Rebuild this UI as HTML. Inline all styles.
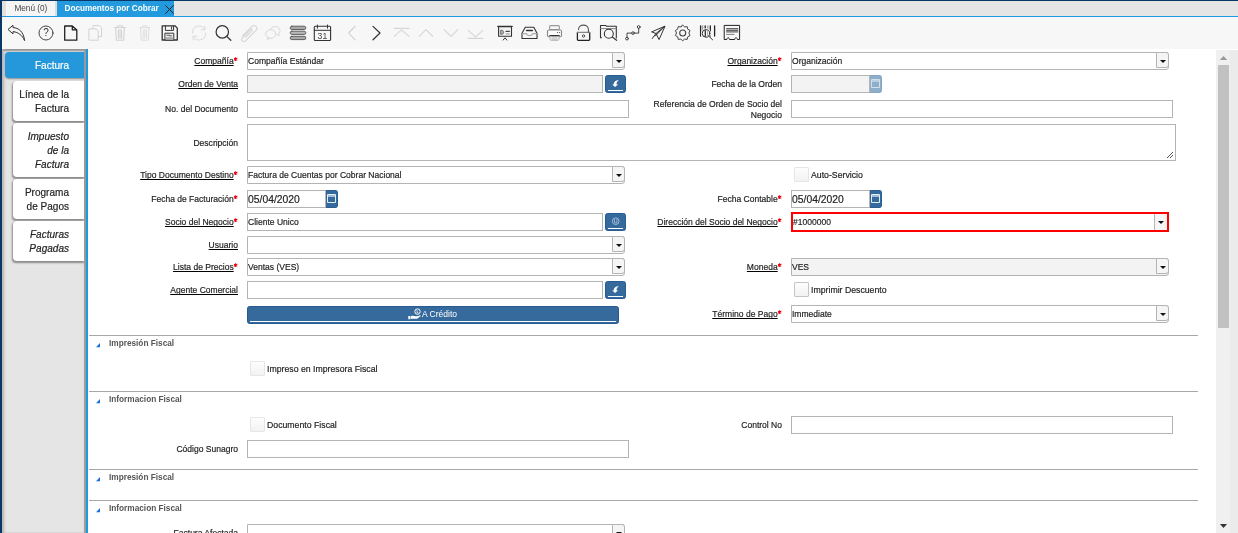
<!DOCTYPE html>
<html><head><meta charset="utf-8">
<style>
*{box-sizing:border-box;margin:0;padding:0}
html,body{width:1238px;height:533px;overflow:hidden;background:#fff;font-family:"Liberation Sans",sans-serif;position:relative}
.abs{position:absolute}
#navl{position:absolute;left:0;top:0;width:2px;height:533px;background:#0a3866}
#navt{position:absolute;left:0;top:0;width:1238px;height:1px;background:#0a3866}
#tabbar{position:absolute;left:2px;top:1px;width:1236px;height:15px;background:#e5e5e5}
#menutab{position:absolute;left:2px;top:1px;width:55px;height:15px;background:#f5f5f5;border-left:4px solid #e1e1e1;border-right:2px solid #dcdcdc;font-size:8.2px;color:#444;line-height:15px;padding-left:8.5px}
#doctab{position:absolute;left:57px;top:1px;width:117px;height:15px;background:#239ade;font-size:8.2px;font-weight:bold;color:#fff;line-height:15px;padding-left:7.5px}
#blueline{position:absolute;left:2px;top:16px;width:1236px;height:1px;background:#1f9ae0}
#toolbar{position:absolute;left:2px;top:17px;width:1236px;height:32px;background:#f7f7f7}
#lpanel{position:absolute;left:2px;top:49px;width:84px;height:484px;background:#e5e5e5;box-shadow:inset 3px 0 3px -1px #b5b5b5, inset -2px 0 1px #9a9a9a, inset 0 2px 2px #8f8f8f}
#lline{position:absolute;left:86px;top:49px;width:2px;height:484px;background:#1f9ae0}
.vt{position:absolute;background:#fff;border-radius:4px 0 0 4px;box-shadow:-0.5px 1.5px 2px #8a8a8a;color:#222}
.vtt{position:absolute;right:15px;top:7.3px;width:200px;text-align:right;font-size:10.8px;-webkit-text-stroke:0.2px currentColor;line-height:13.8px;white-space:nowrap;transform:scaleX(0.93);transform-origin:100% 50%}
.vt.act{background:#2598dc;color:#fff;border-radius:4px 0 0 4px;box-shadow:0 1px 2px #8a8a8a}
#sbar{position:absolute;left:1216px;top:50px;width:22px;height:483px;background:#f0f0f0}
#sbar2{position:absolute;left:1230px;top:50px;width:8px;height:483px;background:#ebebeb}
#sthumb{position:absolute;left:1218px;top:65px;width:11px;height:263px;background:#c1c1c1}
.lbl{position:absolute;width:300px;text-align:right;font-size:9.8px;color:#222;-webkit-text-stroke:0.2px #222;white-space:nowrap;transform:scaleX(0.87);transform-origin:100% 50%}
.lbl u{text-decoration:underline;text-decoration-thickness:1px;text-underline-offset:0.6px;text-decoration-color:#000;text-decoration-skip-ink:none}
.req{vertical-align:2.8px;margin-left:0.4px}
.tb{position:absolute;border:1px solid #b4b4b4;font-size:9.8px;color:#222;-webkit-text-stroke:0.2px #222;white-space:nowrap;overflow:visible}
.it{display:inline-block;transform:scaleX(0.87);transform-origin:0 50%}
.tb.big{font-size:11.5px;color:#222}
.tb.big .it{transform:scaleX(0.9)}
.ddb{position:absolute;width:13px;background:#f5f5f5;border:1px solid #b4b4b4;border-radius:0 3px 3px 0}
.arr{position:absolute;left:2.7px;top:6.8px;width:0;height:0;border-left:3px solid transparent;border-right:3px solid transparent;border-top:3.4px solid #111}
.bb{position:absolute;background:#366a9c;border:1px solid #265c90;border-radius:2.5px}
.bbl{position:absolute;left:2px;right:2px;bottom:1px;height:1px;background:#fff}
.bbt{position:absolute;left:0;right:0;top:0;text-align:center;color:#fff;font-size:9.8px;line-height:15px}
.calb{position:absolute;width:12px;height:18px;background:#366a9c;border:1px solid #2a5f92;border-left:none;border-radius:0 3px 3px 0}
.calb svg{position:absolute;left:0;top:0}
.calb.dis{background:#8eafcc;border-color:#86a6c3}
.sep{position:absolute;left:89px;width:1109px;height:1px;background:#a8a8a8}
.tri{position:absolute}
.hd{position:absolute;font-size:8.25px;font-weight:bold;color:#555;line-height:14px;white-space:nowrap}
.cb{position:absolute;width:15px;height:15px;border:1px solid #e6e6e6;background:linear-gradient(#fdfdfd,#f2f2f2);border-radius:1px}
.cbt{position:absolute;font-size:9.8px;color:#222;-webkit-text-stroke:0.2px #222;line-height:15px;white-space:nowrap;transform:scaleX(0.89);transform-origin:0 50%}
</style></head><body>
<div id="root" style="position:absolute;left:0;top:0;width:1238px;height:533px;overflow:hidden;will-change:transform">
<div id="navt"></div>
<div id="tabbar"></div>
<div id="menutab">Menú (0)</div>
<div id="doctab">Documentos por Cobrar<svg style="position:absolute;left:108px;top:4px" width="9" height="9" viewBox="0 0 9 9"><path d="M0.3 0.3 L8.7 8.7 M8.7 0.3 L0.3 8.7" stroke="#222" stroke-width="1"/></svg></div>
<div id="blueline"></div>
<div id="toolbar"></div>
<svg class="abs" style="left:0;top:17px" width="1238" height="32" viewBox="0 17 1238 32">
 <g fill="none" stroke-linejoin="round" stroke-linecap="round">
  <!-- undo -->
  <path d="M8.3 29.2 L13 25.3 L13 27.6 C18.5 27.8 23.6 31.5 24.6 40.6 C22.4 35.5 18.6 32.3 13 31.6 L13 33.5 Z" stroke="#333" stroke-width="1"/>
  <!-- help -->
  <circle cx="46" cy="33" r="7" stroke="#444" stroke-width="1"/>
  <!-- new -->
  <path d="M64.7 26 H72.3 L76.8 30 V40.2 H64.7 Z M72.3 26 V29.8 H76.8" stroke="#222" stroke-width="1.3"/>
  <!-- copy -->
  <path d="M93 28 V25.6 H99.5 L101.6 27.7 V36.6 H98.4" stroke="#d2d2d2" stroke-width="1"/>
  <path d="M89.3 28.9 H96 L98.2 31 V40.2 H89.3 Z" stroke="#d2d2d2" stroke-width="1"/>
  <!-- trash -->
  <path d="M114.5 27.6 H125.5 M117.6 27.6 V25.8 H122.4 V27.6 M115.6 27.6 L116.4 40.2 H123.6 L124.4 27.6 M118.4 29.8 V38.4 M120 29.8 V38.4 M121.6 29.8 V38.4" stroke="#d0d0d0" stroke-width="1"/>
  <path d="M139.8 27.6 H149.7 M142.5 27.6 V25.8 H147 V27.6 M140.5 27.6 L141.2 40.2 H148.3 L149 27.6 M143.2 29.8 V38.4 M144.8 29.8 V38.4 M146.4 29.8 V38.4" stroke="#dedede" stroke-width="1"/>
  <!-- save -->
  <path d="M162.2 25.8 H175 L177.3 28.1 V40 H162.2 Z" stroke="#333" stroke-width="1.3"/>
  <path d="M165.4 25.8 V30.4 H173.6 V25.8 M171.6 26.8 V29.2" stroke="#333" stroke-width="1"/>
  <rect x="165.3" y="33.2" width="8.5" height="6.8" fill="#f4f4f4" stroke="#333" stroke-width="1"/>
  <rect x="165.8" y="37.2" width="7.5" height="2.6" fill="#aaa"/>
  <path d="M166.8 35.2 H169.2 M169.2 35.8 H171.8" stroke="#555" stroke-width="1"/>
  <!-- refresh -->
  <path d="M192.5 33 A6.5 6.5 0 0 1 204.8 29.6 M205.5 33 A6.5 6.5 0 0 1 193.2 36.4 M204.8 26.2 V29.8 H201.2 M193.2 39.8 V36.2 H196.8" stroke="#dadada" stroke-width="1"/>
  <!-- find -->
  <circle cx="222.3" cy="31.9" r="6.2" stroke="#333" stroke-width="1.2"/>
  <path d="M226.8 36.4 L230.8 40.2" stroke="#333" stroke-width="1.3"/>
  <!-- attach -->
  <g transform="translate(248.8 32.9) rotate(45)">
   <path d="M-2.3 6.5 V-6.8 A2.8 2.8 0 0 1 3.3 -6.8 V8 A2.2 2.2 0 0 1 -1.1 8 V-3.8 A0.9 0.9 0 0 1 0.7 -3.8 V5.5" stroke="#d4d4d4" stroke-width="1"/>
  </g>
  <!-- chat -->
  <path d="M270.6 29 C271.8 26.6 275.3 25.8 277.7 27 C280.3 28.4 280.7 31.8 278.7 33.7 L279 35.8 L277.2 34.6" stroke="#d8d8d8" stroke-width="1"/>
  <ellipse cx="270.8" cy="34" rx="5" ry="4.4" fill="#f7f7f7" stroke="#d8d8d8" stroke-width="1"/>
  <path d="M268 37.9 L267.3 39.6 L269.9 38.3" stroke="#d8d8d8" stroke-width="1"/>
  <!-- multirow -->
  <rect x="290.2" y="26.2" width="15.6" height="3.3" rx="1.6" fill="#a9a9a9" stroke="#555" stroke-width="0.9"/>
  <rect x="290.2" y="31.2" width="15.6" height="3.2" rx="1.6" fill="#b8b8b8" stroke="#555" stroke-width="0.9"/>
  <rect x="290.2" y="36.3" width="15.6" height="3.3" rx="1.6" fill="#a9a9a9" stroke="#555" stroke-width="0.9"/>
  <!-- calendar -->
  <rect x="314.3" y="26.3" width="16.3" height="14.2" rx="1" stroke="#333" stroke-width="1.1"/>
  <path d="M314.3 30.3 H330.6 M317.4 25 V28.2 M327.5 25 V28.2" stroke="#333" stroke-width="1"/>
  <!-- prev/next -->
  <path d="M355 26.4 L348.7 33 L355 39.8" stroke="#d0d0d0" stroke-width="1.1"/>
  <path d="M373 26.4 L380 33 L373 39.8" stroke="#333" stroke-width="1.2"/>
  <!-- first up down last -->
  <path d="M394.2 28.4 H409 M394.2 36.3 L401.5 29.8 L409 36.3" stroke="#d6d6d6" stroke-width="1.1"/>
  <path d="M419.2 36.3 L425.9 29.6 L432.7 36.3" stroke="#d6d6d6" stroke-width="1.1"/>
  <path d="M444.1 29.6 L450.9 36.3 L457.8 29.6" stroke="#d6d6d6" stroke-width="1.1"/>
  <path d="M468.2 30.3 L475.5 36.8 L482.8 30.3 M468.2 38.4 H482.8" stroke="#d6d6d6" stroke-width="1.1"/>
  <!-- report -->
  <path d="M497.8 26.4 H512.2" stroke="#333" stroke-width="1.2"/>
  <path d="M498.6 27.6 H511.4" stroke="#bbb" stroke-width="1"/>
  <path d="M498.6 26.5 V36.2 H511.5 V26.5" stroke="#333" stroke-width="1.1"/>
  <path d="M500.8 30.2 H502 C504.2 30.2 504.2 34.3 502 34.3 H500.8 Z" fill="#aaa" stroke="#777" stroke-width="1"/>
  <path d="M506 31.3 H509.4" stroke="#444" stroke-width="1.2"/>
  <path d="M506 33.8 H509.4" stroke="#aaa" stroke-width="1.2"/>
  <path d="M503.1 40.1 L505 37.8 L506.9 40.1" stroke="#333" stroke-width="1"/>
  <!-- archive -->
  <path d="M522 38.5 V33.3 L525.3 27.3 H533.8 L537 33.3 V38.5 Z" stroke="#333" stroke-width="1.1"/>
  <path d="M522.5 33.6 H526.6 C527 36.3 532 36.3 532.5 33.6 H536.6" stroke="#aaa" stroke-width="1.1"/>
  <path d="M526.6 30.4 H532.4" stroke="#333" stroke-width="1.5"/>
  <!-- print -->
  <rect x="549.6" y="25.6" width="9.8" height="4" rx="1" fill="#f7f7f7" stroke="#999" stroke-width="1.1"/>
  <rect x="547.5" y="30" width="14" height="6.8" rx="1.2" fill="#fbfbfb" stroke="#888" stroke-width="1.1"/>
  <rect x="550" y="35.7" width="9" height="4.5" rx="1.2" fill="#d4d4d4" stroke="#aaa" stroke-width="1"/>
  <path d="M549.8 35.7 H559.2" stroke="#333" stroke-width="1.2"/>
  <path d="M551 36.8 V39.5 M558 36.8 V39.5" stroke="#eee" stroke-width="1"/>
  <circle cx="557.4" cy="32.5" r="0.55" fill="#333"/><circle cx="559.6" cy="32.5" r="0.55" fill="#333"/>
  <!-- unlock -->
  <path d="M577.4 32.4 V39.6 Q577.4 40.4 578.2 40.4 H588.9 Q589.7 40.4 589.7 39.6 V32.4" stroke="#222" stroke-width="1.3"/><path d="M577.4 32.4 H589.7" stroke="#888" stroke-width="1.1"/>
  <path d="M578.5 29.6 C578.5 23.6 588.4 23.6 588.4 29.6 V32.2" stroke="#555" stroke-width="1.1"/>
  <ellipse cx="583.5" cy="36" rx="1.1" ry="1.3" stroke="#444" stroke-width="0.9"/>
  <!-- zoom across -->
  <path d="M601.5 37.8 H600.5 V25.5 H605.8 L606.5 26.3 H616.3 V38" stroke="#333" stroke-width="1.1"/>
  <path d="M600.5 28.6 H616.3" stroke="#777" stroke-width="0.9"/>
  <circle cx="608.8" cy="33.7" r="4.5" stroke="#333" stroke-width="1.1"/>
  <path d="M612.2 37 L616.6 40.3" stroke="#333" stroke-width="1.1"/>
  <!-- workflow -->
  <circle cx="627" cy="38.6" r="1.4" stroke="#333" stroke-width="0.9"/>
  <circle cx="633" cy="33.1" r="1.3" stroke="#333" stroke-width="0.9"/>
  <circle cx="638.7" cy="27" r="1.4" stroke="#333" stroke-width="0.9"/>
  <path d="M627 37.2 V33.1 H631.7 M634.3 33.1 H638.7 V28.4" stroke="#333" stroke-width="0.9"/>
  <!-- send -->
  <path d="M664.7 26.3 L651.6 31.9 L656 33.5 L658.9 39.2 Z M664.7 26.3 L656 33.5 M656 33.5 L652.2 38.6 M664.7 26.3 L655.3 36" stroke="#333" stroke-width="1"/>
  <!-- gear -->
  <path d="M682.7 25.2 L684.6 26.9 L687.2 26.6 L687.7 29.1 L690 30.5 L688.9 33 L690 35.5 L687.7 36.9 L687.2 39.4 L684.6 39.1 L682.7 40.8 L680.8 39.1 L678.2 39.4 L677.7 36.9 L675.4 35.5 L676.5 33 L675.4 30.5 L677.7 29.1 L678.2 26.6 L680.8 26.9 Z" stroke="#444" stroke-width="1"/>
  <circle cx="682.7" cy="33" r="3" stroke="#444" stroke-width="1.1"/>
  <!-- barcode search -->
  <path d="M700.6 25.8 V36 M705.2 25.8 V31 M710.3 25.8 V36 M714.6 25.8 V36" stroke="#222" stroke-width="1.3"/>
  <path d="M702.7 25.8 V36 M707.8 25.8 V36" stroke="#999" stroke-width="1.2"/>
  <circle cx="706" cy="33.4" r="3.8" fill="#f7f7f7" stroke="#f7f7f7" stroke-width="2.6"/>
  <circle cx="706" cy="33.4" r="3.8" fill="#f7f7f7" stroke="#333" stroke-width="1"/>
  <path d="M705.3 30.6 V36.2" stroke="#222" stroke-width="1.2"/>
  <path d="M707.6 30.8 V36" stroke="#aaa" stroke-width="1"/>
  <path d="M708.8 36.2 L712.6 39.8" stroke="#333" stroke-width="1"/>
  <!-- receipt -->
  <path d="M724.6 25.4 H739.6 V39.5 H737.4 C736.8 37 735.3 37 734.7 39.5 H729.5 C728.9 37 727.4 37 726.8 39.5 H724.6 Z" stroke="#222" stroke-width="1"/>
  <path d="M726.6 28.7 H737.8 M726.6 30.3 H737.8 M726.6 31.9 H737.8" stroke="#666" stroke-width="1.2"/>
  <path d="M726.6 34.4 H734" stroke="#666" stroke-width="0.8"/>
 </g>
 <text x="46" y="36.3" text-anchor="middle" font-family="Liberation Sans" font-size="10" fill="#333">?</text>
 <text x="322.4" y="38.5" text-anchor="middle" font-family="Liberation Sans" font-size="8.6" fill="#444">31</text>
</svg>
<div id="lpanel"></div>
<div id="lline"></div>
<div class="vt act" style="left:5px;top:52px;width:79px;height:26px"><div class="vtt" style="top:0.4px;line-height:26px">Factura</div></div>
<div class="vt" style="left:13px;top:81px;width:71px;height:40px"><div class="vtt">Línea de la<br>Factura</div></div>
<div class="vt" style="left:13px;top:123px;width:71px;height:54px"><div class="vtt" style="font-style:italic">Impuesto<br>de la<br>Factura</div></div>
<div class="vt" style="left:13px;top:179px;width:71px;height:40px"><div class="vtt">Programa<br>de Pagos</div></div>
<div class="vt" style="left:13px;top:221px;width:71px;height:40px"><div class="vtt" style="font-style:italic">Facturas<br>Pagadas</div></div>
<div id="navl"></div>
<div class="lbl" style="left:-62px;top:52px;height:18px;line-height:18px"><u>Compañía</u><svg class="req" width="4.6" height="4.4" viewBox="0 0 4.6 4.4"><path d="M2.3 0.2 V4.2 M0.4 1.2 L4.2 3.2 M0.4 3.2 L4.2 1.2" stroke="#f0000c" stroke-width="1.2"/></svg></div>
<div class="tb" style="left:247px;top:52px;width:378px;height:18px;background:#fff;line-height:16px;border-radius:0 3px 3px 0"><span class="it">Compañía Estándar</span><div class="ddb" style="right:-1px;top:-1px;height:16px"><i class="arr"></i></div></div>
<div class="lbl" style="left:482px;top:52px;height:18px;line-height:18px"><u>Organización</u><svg class="req" width="4.6" height="4.4" viewBox="0 0 4.6 4.4"><path d="M2.3 0.2 V4.2 M0.4 1.2 L4.2 3.2 M0.4 3.2 L4.2 1.2" stroke="#f0000c" stroke-width="1.2"/></svg></div>
<div class="tb" style="left:791px;top:52px;width:378px;height:18px;background:#fff;line-height:16px;border-radius:0 3px 3px 0"><span class="it">Organización</span><div class="ddb" style="right:-1px;top:-1px;height:16px"><i class="arr"></i></div></div>
<div class="lbl" style="left:-62px;top:75px;height:18px;line-height:18px"><u>Orden de Venta</u></div>
<div class="tb " style="left:247px;top:75px;width:356px;height:18px;background:#f3f3f3;line-height:16px"><span class="it"></span></div>
<div class="bb" style="left:605px;top:75px;width:21px;height:18px"><svg width="21" height="18" viewBox="0 0 21 18" style="position:absolute;left:-1px;top:-1px"><path d="M13.9 5 C10.4 5.2 8.5 7.3 8.8 9.5 L7.2 9.5 L10.1 12.1 L13.2 9.3 L11.5 9.4 C11.4 7.7 12.3 6.1 13.9 5Z" fill="#fff"/></svg><div class="bbl"></div></div>
<div class="lbl" style="left:482px;top:75px;height:18px;line-height:18px">Fecha de la Orden</div>
<div class="tb " style="left:791px;top:75px;width:79px;height:18px;background:#f3f3f3;line-height:16px"><span class="it"></span></div>
<div class="calb dis" style="left:870px;top:75px"><svg width="12" height="18" viewBox="0 0 12 18"><path d="M1.5 3.5 H9.5 V11.5 H1.5 Z" fill="none" stroke="#d3e0ec" stroke-width="1"/><path d="M1.5 5 H9.5" stroke="#d3e0ec" stroke-width="1.3"/></svg></div>
<div class="lbl" style="left:-62px;top:100px;height:18px;line-height:18px">No. del Documento</div>
<div class="tb " style="left:247px;top:100px;width:382px;height:18px;background:#fff;line-height:16px"><span class="it"></span></div>
<div class="lbl" style="left:482px;top:99px;height:22px;line-height:10.5px;white-space:normal;padding-top:0">Referencia de Orden de Socio del<br>Negocio</div>
<div class="tb " style="left:791px;top:100px;width:382px;height:18px;background:#fff;line-height:16px"><span class="it"></span></div>
<div class="lbl" style="left:-62px;top:124px;height:37px;line-height:37px">Descripción</div>
<div class="tb" style="left:247px;top:124px;width:929px;height:37px"><svg width="8" height="8" style="position:absolute;right:1px;bottom:1px" viewBox="0 0 8 8"><path d="M1 7 L7 1 M4 7 L7 4" stroke="#555" stroke-width="1"/></svg></div>
<div class="lbl" style="left:-62px;top:166px;height:18px;line-height:18px"><u>Tipo Documento Destino</u><svg class="req" width="4.6" height="4.4" viewBox="0 0 4.6 4.4"><path d="M2.3 0.2 V4.2 M0.4 1.2 L4.2 3.2 M0.4 3.2 L4.2 1.2" stroke="#f0000c" stroke-width="1.2"/></svg></div>
<div class="tb" style="left:247px;top:166px;width:378px;height:18px;background:#fff;line-height:16px;border-radius:0 3px 3px 0"><span class="it">Factura de Cuentas por Cobrar Nacional</span><div class="ddb" style="right:-1px;top:-1px;height:16px"><i class="arr"></i></div></div>
<div class="cb" style="left:794px;top:167px;border-color:#e6e6e6"></div>
<div class="cbt" style="left:811px;top:167px">Auto-Servicio</div>
<div class="lbl" style="left:-62px;top:190px;height:18px;line-height:18px">Fecha de Facturación<svg class="req" width="4.6" height="4.4" viewBox="0 0 4.6 4.4"><path d="M2.3 0.2 V4.2 M0.4 1.2 L4.2 3.2 M0.4 3.2 L4.2 1.2" stroke="#f0000c" stroke-width="1.2"/></svg></div>
<div class="tb big" style="left:247px;top:190px;width:79px;height:18px;background:#fff;line-height:16px"><span class="it">05/04/2020</span></div>
<div class="calb" style="left:326px;top:190px"><svg width="12" height="18" viewBox="0 0 12 18"><path d="M1.5 3.5 H9.5 V11.5 H1.5 Z" fill="none" stroke="#e3ecf5" stroke-width="1"/><path d="M1.5 5 H9.5" stroke="#e3ecf5" stroke-width="1.3"/></svg></div>
<div class="lbl" style="left:482px;top:190px;height:18px;line-height:18px">Fecha Contable<svg class="req" width="4.6" height="4.4" viewBox="0 0 4.6 4.4"><path d="M2.3 0.2 V4.2 M0.4 1.2 L4.2 3.2 M0.4 3.2 L4.2 1.2" stroke="#f0000c" stroke-width="1.2"/></svg></div>
<div class="tb big" style="left:791px;top:190px;width:79px;height:18px;background:#fff;line-height:16px"><span class="it">05/04/2020</span></div>
<div class="calb" style="left:870px;top:190px"><svg width="12" height="18" viewBox="0 0 12 18"><path d="M1.5 3.5 H9.5 V11.5 H1.5 Z" fill="none" stroke="#e3ecf5" stroke-width="1"/><path d="M1.5 5 H9.5" stroke="#e3ecf5" stroke-width="1.3"/></svg></div>
<div class="lbl" style="left:-62px;top:213px;height:18px;line-height:18px"><u>Socio del Negocio</u><svg class="req" width="4.6" height="4.4" viewBox="0 0 4.6 4.4"><path d="M2.3 0.2 V4.2 M0.4 1.2 L4.2 3.2 M0.4 3.2 L4.2 1.2" stroke="#f0000c" stroke-width="1.2"/></svg></div>
<div class="tb " style="left:247px;top:213px;width:356px;height:18px;background:#fff;line-height:16px"><span class="it">Cliente Unico</span></div>
<div class="bb" style="left:605px;top:213px;width:21px;height:18px"><svg width="21" height="18" viewBox="0 0 21 18" style="position:absolute;left:-1px;top:-1px"><circle cx="10.7" cy="8.2" r="3.3" fill="none" stroke="#a3bdd8" stroke-width="1"/><path d="M9.5 6.3 V9.6 M11.9 6.3 V9.6 M9.5 9.8 H11.9" stroke="#a3bdd8" stroke-width="0.9" fill="none"/></svg><div class="bbl"></div></div>
<div class="lbl" style="left:482px;top:212px;height:20px;line-height:20px"><u>Dirección del Socio del Negocio</u><svg class="req" width="4.6" height="4.4" viewBox="0 0 4.6 4.4"><path d="M2.3 0.2 V4.2 M0.4 1.2 L4.2 3.2 M0.4 3.2 L4.2 1.2" stroke="#f0000c" stroke-width="1.2"/></svg></div>
<div class="tb" style="left:791px;top:212px;width:378px;height:20px;background:#fff;border:2px solid #f00;line-height:16px"><span class="it">#1000000</span><div class="ddb" style="right:0;top:0;height:16px;border-radius:0;border-right:none;border-top:none;border-bottom:none"><i class="arr"></i></div></div>
<div class="lbl" style="left:-62px;top:236px;height:18px;line-height:18px"><u>Usuario</u></div>
<div class="tb" style="left:247px;top:236px;width:378px;height:18px;background:#fff;line-height:16px;border-radius:0 3px 3px 0"><span class="it"></span><div class="ddb" style="right:-1px;top:-1px;height:16px"><i class="arr"></i></div></div>
<div class="lbl" style="left:-62px;top:258px;height:18px;line-height:18px"><u>Lista de Precios</u><svg class="req" width="4.6" height="4.4" viewBox="0 0 4.6 4.4"><path d="M2.3 0.2 V4.2 M0.4 1.2 L4.2 3.2 M0.4 3.2 L4.2 1.2" stroke="#f0000c" stroke-width="1.2"/></svg></div>
<div class="tb" style="left:247px;top:258px;width:378px;height:18px;background:#fff;line-height:16px;border-radius:0 3px 3px 0"><span class="it">Ventas (VES)</span><div class="ddb" style="right:-1px;top:-1px;height:16px"><i class="arr"></i></div></div>
<div class="lbl" style="left:482px;top:258px;height:18px;line-height:18px"><u>Moneda</u><svg class="req" width="4.6" height="4.4" viewBox="0 0 4.6 4.4"><path d="M2.3 0.2 V4.2 M0.4 1.2 L4.2 3.2 M0.4 3.2 L4.2 1.2" stroke="#f0000c" stroke-width="1.2"/></svg></div>
<div class="tb" style="left:791px;top:258px;width:378px;height:18px;background:#f3f3f3;line-height:16px;border-radius:0 3px 3px 0"><span class="it">VES</span><div class="ddb" style="right:-1px;top:-1px;height:16px"><i class="arr"></i></div></div>
<div class="lbl" style="left:-62px;top:281px;height:18px;line-height:18px"><u>Agente Comercial</u></div>
<div class="tb " style="left:247px;top:281px;width:356px;height:18px;background:#fff;line-height:16px"><span class="it"></span></div>
<div class="bb" style="left:605px;top:281px;width:21px;height:18px"><svg width="21" height="18" viewBox="0 0 21 18" style="position:absolute;left:-1px;top:-1px"><path d="M13.9 5 C10.4 5.2 8.5 7.3 8.8 9.5 L7.2 9.5 L10.1 12.1 L13.2 9.3 L11.5 9.4 C11.4 7.7 12.3 6.1 13.9 5Z" fill="#fff"/></svg><div class="bbl"></div></div>
<div class="cb" style="left:794px;top:282px;border-color:#c4c4c4"></div>
<div class="cbt" style="left:811px;top:282px">Imprimir Descuento</div>
<div class="bb" style="left:247px;top:306px;width:372px;height:18px"><svg width="14" height="12" viewBox="0 0 14 12" style="position:absolute;left:160px;top:1px"><circle cx="9.5" cy="3.6" r="2.7" fill="none" stroke="#fff" stroke-width="1"/><path d="M9.1 2.3 V4.7 H10.3" stroke="#fff" stroke-width="0.8" fill="none"/><path d="M0.3 8 H2.3 V11.3 H0.3Z M2.8 8.2 C4.5 7.5 6 7.7 7.5 8.3 H9.3 L12.3 7.2 L12.7 8 L9 10.8 H2.8Z" fill="#fff"/></svg><span class="it" style="position:absolute;left:174px;top:-1.5px;line-height:15px;color:#fff;font-size:9.8px">A Crédito</span><div class="bbl"></div></div>
<div class="lbl" style="left:482px;top:305px;height:18px;line-height:18px"><u>Término de Pago</u><svg class="req" width="4.6" height="4.4" viewBox="0 0 4.6 4.4"><path d="M2.3 0.2 V4.2 M0.4 1.2 L4.2 3.2 M0.4 3.2 L4.2 1.2" stroke="#f0000c" stroke-width="1.2"/></svg></div>
<div class="tb" style="left:791px;top:305px;width:378px;height:18px;background:#fff;line-height:16px;border-radius:0 3px 3px 0"><span class="it">Immediate</span><div class="ddb" style="right:-1px;top:-1px;height:16px"><i class="arr"></i></div></div>
<div class="sep" style="top:335px"></div>
<svg class="tri" style="left:96px;top:343.3px" width="4" height="4.3" viewBox="0 0 4 4.3"><path d="M4 0 L4 4.3 L0 4.3 Z" fill="#1a6fd6"/></svg>
<div class="hd" style="left:109px;top:337.2px">Impresión Fiscal</div>
<div class="cb" style="left:250px;top:361px;border-color:#e6e6e6"></div>
<div class="cbt" style="left:267px;top:361px">Impreso en Impresora Fiscal</div>
<div class="sep" style="top:391px"></div>
<svg class="tri" style="left:96px;top:399.3px" width="4" height="4.3" viewBox="0 0 4 4.3"><path d="M4 0 L4 4.3 L0 4.3 Z" fill="#1a6fd6"/></svg>
<div class="hd" style="left:109px;top:393.2px">Informacion Fiscal</div>
<div class="cb" style="left:250px;top:417px;border-color:#e6e6e6"></div>
<div class="cbt" style="left:267px;top:417px">Documento Fiscal</div>
<div class="lbl" style="left:482px;top:416px;height:18px;line-height:18px">Control No</div>
<div class="tb " style="left:791px;top:416px;width:382px;height:18px;background:#fff;line-height:16px"><span class="it"></span></div>
<div class="lbl" style="left:-62px;top:440px;height:18px;line-height:18px">Código Sunagro</div>
<div class="tb " style="left:247px;top:440px;width:382px;height:18px;background:#fff;line-height:16px"><span class="it"></span></div>
<div class="sep" style="top:469px"></div>
<svg class="tri" style="left:96px;top:477.3px" width="4" height="4.3" viewBox="0 0 4 4.3"><path d="M4 0 L4 4.3 L0 4.3 Z" fill="#1a6fd6"/></svg>
<div class="hd" style="left:109px;top:471.2px">Impresión Fiscal</div>
<div class="sep" style="top:500px"></div>
<svg class="tri" style="left:96px;top:508.3px" width="4" height="4.3" viewBox="0 0 4 4.3"><path d="M4 0 L4 4.3 L0 4.3 Z" fill="#1a6fd6"/></svg>
<div class="hd" style="left:109px;top:502.2px">Informacion Fiscal</div>
<div class="lbl" style="left:-62px;top:524px;height:18px;line-height:18px">Factura Afectada</div>
<div class="tb" style="left:247px;top:524px;width:378px;height:18px;background:#fff;line-height:16px;border-radius:0 3px 3px 0"><span class="it"></span><div class="ddb" style="right:-1px;top:-1px;height:16px"><i class="arr"></i></div></div>
<div id="sbar"></div>
<div id="sbar2"></div>
<div id="sthumb"></div>
<svg class="abs" style="left:1216px;top:49px" width="22" height="484" viewBox="0 0 22 484"><path d="M3.8 11 L7.5 7 L11.2 11 Z" fill="#999"/><path d="M4 475 L7.5 479 L11 475 Z" fill="#333"/></svg>
</div>
</body></html>
